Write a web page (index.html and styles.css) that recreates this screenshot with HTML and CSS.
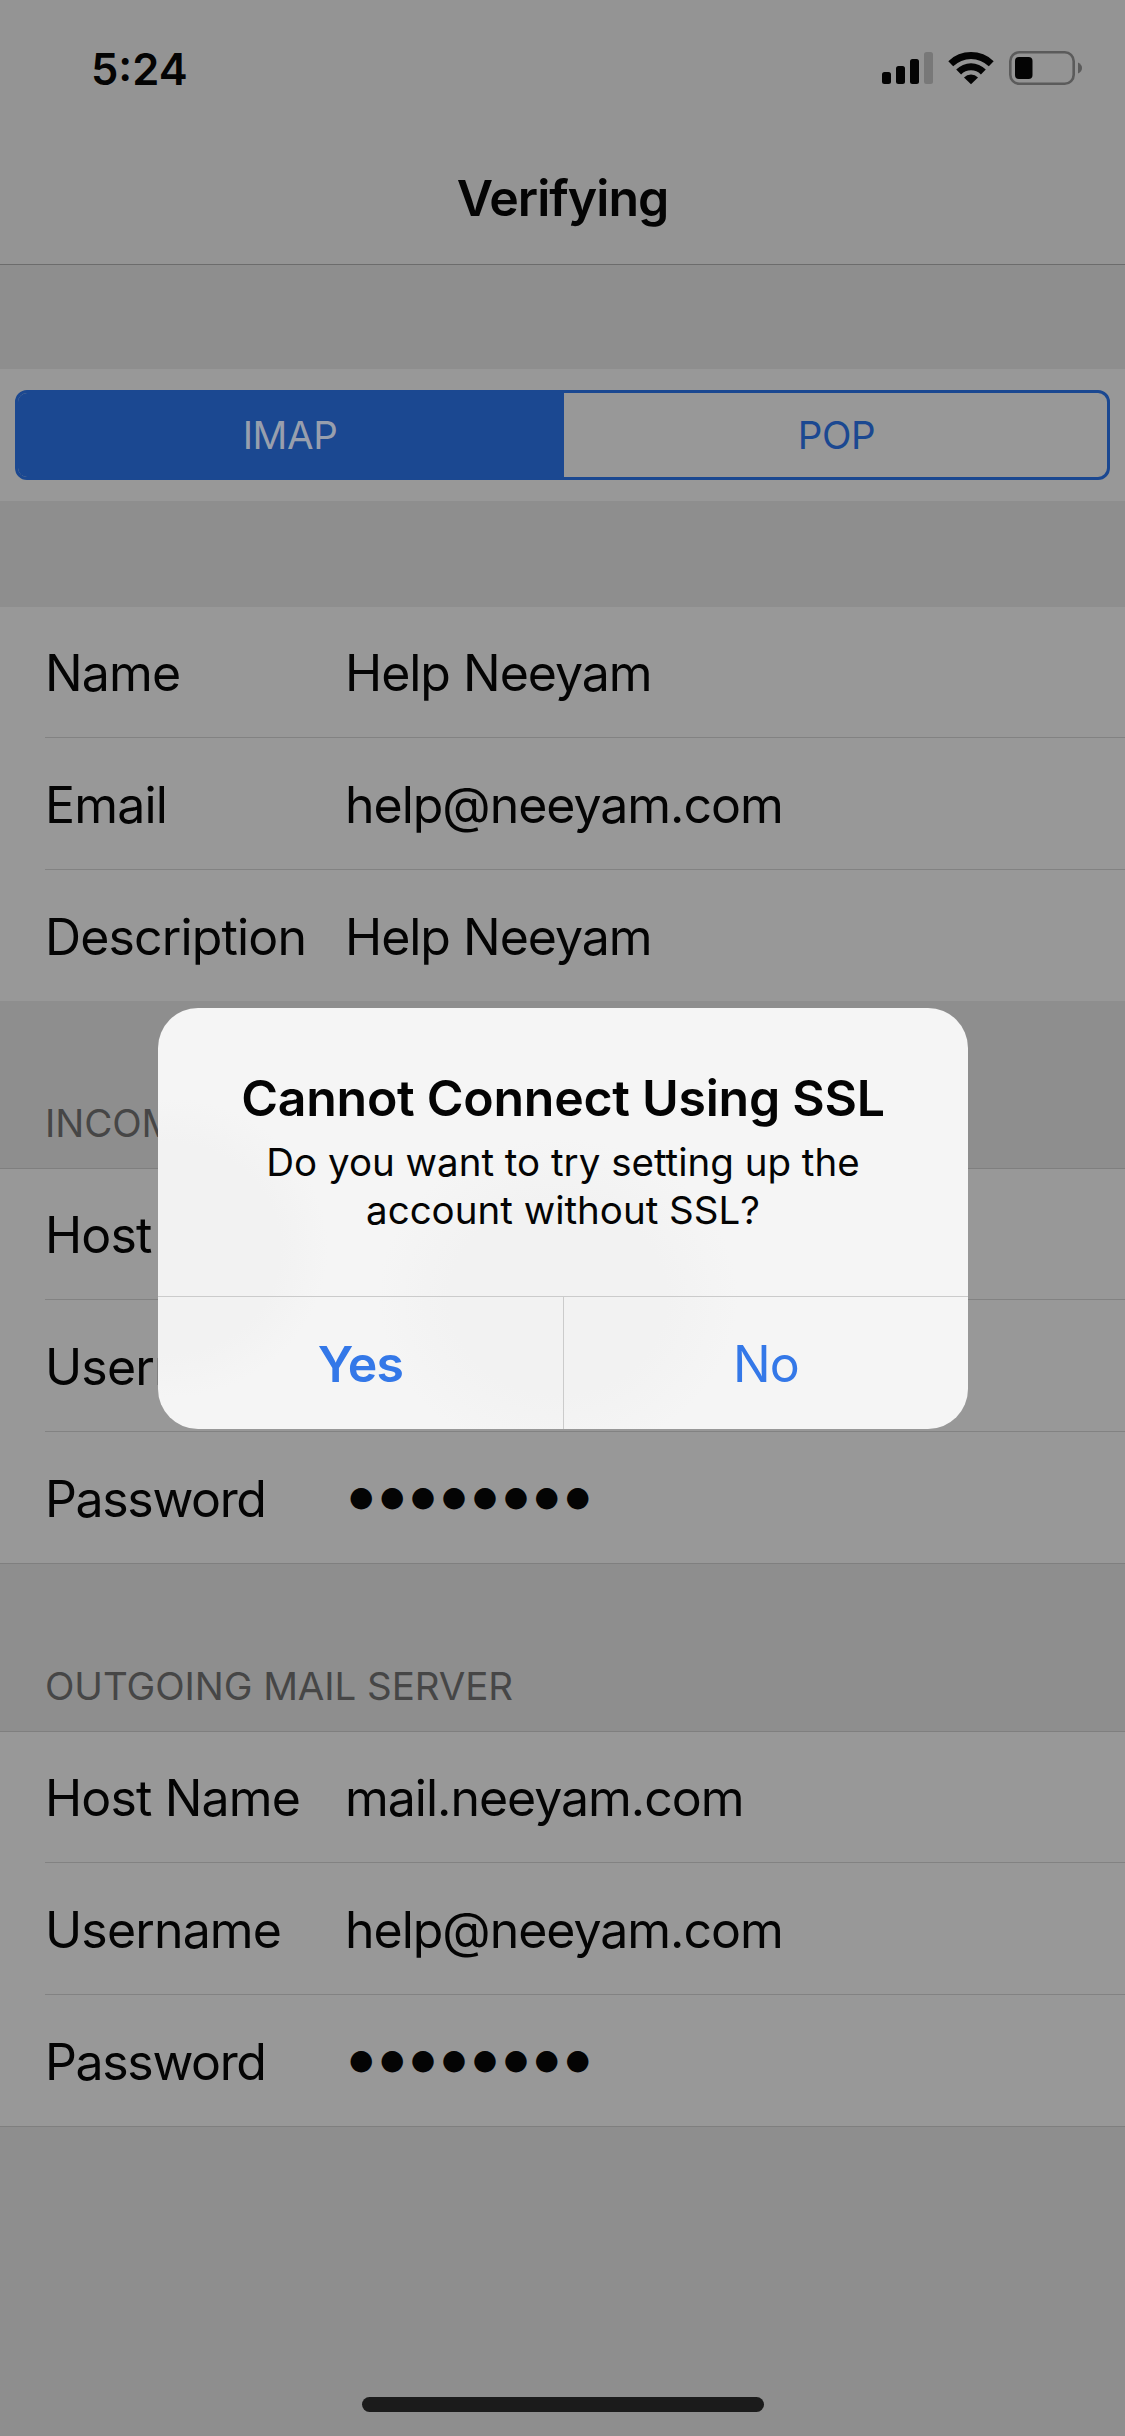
FILE: index.html
```html
<!DOCTYPE html>
<html lang="en">
<head>
<meta charset="utf-8">
<title>Verifying</title>
<link rel="stylesheet" href="styles.css">
</head>
<body>
<div class="screen">
  <header class="top">
    <div class="status">
      <span class="time">5:24</span>
      <svg class="status-icons" width="204" height="40" viewBox="0 0 204 40">
        <rect x="2" y="23" width="9" height="12" rx="2.5"/>
        <rect x="16" y="17" width="9" height="18" rx="2.5"/>
        <rect x="30" y="10" width="9" height="25" rx="2.5"/>
        <rect x="44" y="3" width="9" height="32" rx="2.5" fill="#787878"/>
        <path d="M68.300 12.200A32.500 32.500 0 0 1 113.700 12.200L108.800 17.300A25.500 25.500 0 0 0 73.200 17.300Z"/>
        <path d="M76.200 20.400A21 21 0 0 1 105.800 20.400L100.900 25.400A14 14 0 0 0 81.100 25.400Z"/>
        <path d="M84 28.400A10 10 0 0 1 98 28.400L91 35.300Z"/>
        <rect x="130.300" y="3.300" width="63.400" height="31.400" rx="9" fill="none" stroke="#5b5b5b" stroke-width="2.600"/>
        <rect x="135" y="8" width="17.500" height="22" rx="4"/>
        <path d="M198 13.500Q202 15.500 202 19T198 24.500Z" fill="#5b5b5b"/>
      </svg>
    </div>
    <h1 class="title">Verifying</h1>
  </header>

  <div class="tabs-band">
    <div class="tabs">
      <span class="tab tab-on">IMAP</span>
      <span class="tab">POP</span>
    </div>
  </div>

  <section class="group group-plain">
    <div class="row"><span class="label">Name</span><span class="value">Help Neeyam</span></div>
    <div class="row"><span class="label">Email</span><span class="value">help@neeyam.com</span></div>
    <div class="row"><span class="label">Description</span><span class="value">Help Neeyam</span></div>
  </section>

  <h2 class="heading">INCOMING MAIL SERVER</h2>
  <section class="group group-lined">
    <div class="row"><span class="label">Host Name</span><span class="value">mail.neeyam.com</span></div>
    <div class="row"><span class="label">Username</span><span class="value">help@neeyam.com</span></div>
    <div class="row"><span class="label label-tight">Password</span><span class="dots">●●●●●●●●</span></div>
  </section>

  <h2 class="heading">OUTGOING MAIL SERVER</h2>
  <section class="group group-lined">
    <div class="row"><span class="label">Host Name</span><span class="value">mail.neeyam.com</span></div>
    <div class="row"><span class="label">Username</span><span class="value">help@neeyam.com</span></div>
    <div class="row"><span class="label label-tight">Password</span><span class="dots">●●●●●●●●</span></div>
  </section>

  <div class="home-bar"></div>

  <div class="dialog" role="alertdialog">
    <div class="dialog-text">
      <h3 class="dialog-title">Cannot Connect Using SSL</h3>
      <p class="dialog-message">Do you want to try setting up the<br>account without SSL?</p>
    </div>
    <div class="dialog-actions">
      <span class="action action-main">Yes</span>
      <span class="action">No</span>
    </div>
  </div>
</div>
</body>
</html>
```
FILE: styles.css
```css
* { box-sizing: border-box; margin: 0; padding: 0; }

body {
  background: #8e8e8e;
  color: #040404;
  font-family: Inter, "Liberation Sans", sans-serif;
  font-size: 50px;
}

.screen {
  position: relative;
  display: flex;
  flex-direction: column;
  width: 1125px;
  height: 2436px;
  overflow: hidden;
  background: #8e8e8e;
}

.top {
  height: 265px;
  background: #949494;
  border-bottom: 1px solid #6c6c6c;
}

.status {
  display: flex;
  justify-content: space-between;
  align-items: center;
  height: 138px;
  padding: 0 41px 0 91px;
}

.time { font-size: 43.5px; font-weight: 600; }
.status-icons { fill: #040404; }

.title {
  height: 120px;
  font-size: 50px;
  font-weight: 600;
  letter-spacing: -0.95px;
  line-height: 120px;
  text-align: center;
}

.tabs-band {
  height: 132px;
  margin-top: 104px;
  padding: 21px 15px;
  background: #989898;
}

.tabs {
  display: grid;
  grid-template-columns: 546px 1fr;
  height: 90px;
  border: 3px solid #1b4891;
  border-radius: 12px;
  overflow: hidden;
}

.tab {
  padding-left: 2px;
  color: #1b4891;
  font-size: 38.5px;
  letter-spacing: -0.4px;
  line-height: 84px;
  text-align: center;
}

.tab-on { padding: 0 2px 0 0; background: #1b4891; color: #989fad; }

.group { background: #989898; }
.group-plain { margin-top: 106px; }
.group-lined { border-top: 1px solid #7f7f7f; border-bottom: 1px solid #7f7f7f; }

.row {
  display: flex;
  align-items: center;
  height: 130px;
  margin-left: 45px;
  padding-top: 2px;
  letter-spacing: -1.02px;
}

.row + .row { height: 132px; border-top: 1px solid #828282; }
.label { width: 300px; white-space: nowrap; letter-spacing: -0.85px; }
.label-tight { letter-spacing: -1.35px; }
.value { white-space: nowrap; }

.dots {
  padding: 0 0 4px 4px;
  font-family: "DejaVu Sans", sans-serif;
  font-size: 28px;
  letter-spacing: 6.5px;
}

.heading {
  height: 167px;
  padding: 89px 0 0 45px;
  color: #464646;
  font-size: 38.5px;
  font-weight: 400;
  letter-spacing: -0.08px;
  line-height: 66px;
}

.home-bar {
  position: absolute;
  left: 362px;
  top: 2397px;
  width: 402px;
  height: 15px;
  border-radius: 8px;
  background: #1b1b1b;
}

.dialog {
  position: absolute;
  left: 158px;
  top: 1008px;
  width: 810px;
  height: 421px;
  border-radius: 40px;
  overflow: hidden;
  background:
    radial-gradient(ellipse 160px 150px at 10px 240px, #f2f2f2 70%, transparent),
    radial-gradient(ellipse 180px 160px at 400px 290px, #f2f2f2 60%, transparent),
    #f5f5f5;
}

.dialog-text { height: 288px; padding-top: 60px; text-align: center; }

.dialog-title {
  font-size: 50px;
  font-weight: 600;
  letter-spacing: -0.27px;
  line-height: 60px;
}

.dialog-message {
  margin-top: 10px;
  font-size: 38.5px;
  line-height: 48px;
}

.dialog-actions {
  display: grid;
  grid-template-columns: 1fr 1fr;
  height: 133px;
  border-top: 1px solid #cbcbcb;
}

.action {
  color: #3478e8;
  letter-spacing: -0.8px;
  line-height: 134px;
  text-align: center;
}

.action + .action { border-left: 1px solid #cbcbcb; }
.action-main { font-weight: 600; }
```
